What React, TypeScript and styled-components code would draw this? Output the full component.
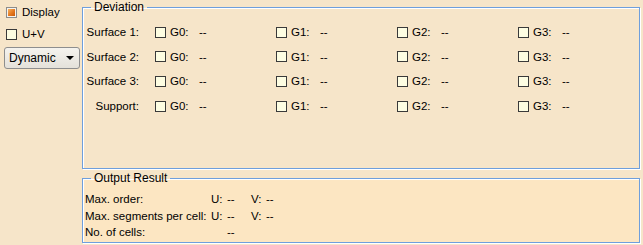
import React from 'react';
import styled, { createGlobalStyle } from 'styled-components';

const GlobalStyle = createGlobalStyle`
  html, body {
    margin: 0;
    padding: 0;
    background: #f6e5c9;
  }
  body {
    font-family: "Liberation Sans", Arial, sans-serif;
    font-size: 11.5px;
    color: #000;
  }
`;

const Page = styled.div`
  width: 643px;
  height: 245px;
  display: flex;
  overflow: hidden;
  background: #f6e5c9;
`;

const LeftColumn = styled.div`
  width: 82px;
  flex: none;
  display: flex;
  flex-direction: column;
  padding: 5px 0 0 6px;
  box-sizing: border-box;
`;

const OptionRow = styled.label`
  display: flex;
  align-items: center;
  height: 14px;
  margin-bottom: 8px;
  gap: 5px;
`;

const Box = styled.span<{ $mixed?: boolean }>`
  width: 11px;
  height: 11px;
  box-sizing: border-box;
  flex: none;
  border: 1px solid ${p => (p.$mixed ? '#8c8c8c' : '#3a3a3a')};
  background: ${p => (p.$mixed ? '#f6f4ee' : '#fdfde2')};
  display: flex;
  align-items: center;
  justify-content: center;

  &::after {
    content: '';
    display: ${p => (p.$mixed ? 'block' : 'none')};
    width: 7px;
    height: 7px;
    background: linear-gradient(135deg, #f7b25e 0%, #e5781f 55%, #c95a0a 100%);
  }
`;

const Select = styled.div`
  margin-left: -2px;
  margin-top: -2px;
  width: 76px;
  height: 22px;
  box-sizing: border-box;
  border: 1px solid #8e8e8e;
  border-radius: 3px;
  background: linear-gradient(#f5f3ee, #e4e1da);
  display: flex;
  align-items: center;
  justify-content: space-between;
  padding: 0 5px 0 4px;
  font-size: 12px;
`;

const Arrow = styled.span`
  width: 0;
  height: 0;
  border-left: 4px solid transparent;
  border-right: 4px solid transparent;
  border-top: 4px solid #000;
`;

const RightColumn = styled.div`
  width: 558px;
  flex: none;
  display: flex;
  flex-direction: column;
  gap: 2px;
`;

const Group = styled.fieldset<{ $height: number; $bg?: string }>`
  margin: 0;
  padding: 5px 0 0 2px;
  min-width: 0;
  width: 558px;
  height: ${p => p.$height}px;
  box-sizing: border-box;
  border: 1px solid #6f9fdc;
  box-shadow: inset 1px 1px 0 #ffffff, 1px 1px 0 #ffffff;
  background: ${p => p.$bg || 'transparent'};
  background-clip: padding-box;
`;

const Legend = styled.legend`
  margin-left: 6px;
  padding: 0 3px;
  height: 14px;
  line-height: 14px;
  font-size: 12px;
`;

const DevGrid = styled.div`
  display: grid;
  grid-template-columns: 70px repeat(4, 121px);
  grid-auto-rows: 24.6px;
  align-items: center;
  margin-top: 1px;
`;

const RowLabel = styled.span`
  text-align: right;
  padding-right: 16px;
  white-space: nowrap;
`;

const GCell = styled.label`
  display: flex;
  align-items: center;
`;

const GName = styled.span`
  width: 29px;
  margin-left: 4px;
`;

const OutGrid = styled.div`
  display: grid;
  grid-template-columns: 126px 16px 24px 15px auto;
  grid-auto-rows: 16.5px;
  align-items: center;
  margin-top: 1px;
  white-space: nowrap;
`;

const rows = ['Surface 1:', 'Surface 2:', 'Surface 3:', 'Support:'];
const orders = ['G0', 'G1', 'G2', 'G3'];

export default function App() {
  return (
    <>
      <GlobalStyle />
      <Page>
        <LeftColumn>
          <OptionRow>
            <Box $mixed />
            <span>Display</span>
          </OptionRow>
          <OptionRow>
            <Box />
            <span>U+V</span>
          </OptionRow>
          <Select>
            <span>Dynamic</span>
            <Arrow />
          </Select>
        </LeftColumn>
        <RightColumn>
          <Group $height={169}>
            <Legend>Deviation</Legend>
            <DevGrid>
              {rows.map(r => (
                <React.Fragment key={r}>
                  <RowLabel>{r}</RowLabel>
                  {orders.map(o => (
                    <GCell key={o}>
                      <Box />
                      <GName>{o}:</GName>
                      <span>--</span>
                    </GCell>
                  ))}
                </React.Fragment>
              ))}
            </DevGrid>
          </Group>
          <Group $height={72} $bg="#fce6c2">
            <Legend>Output Result</Legend>
            <OutGrid>
              <span>Max. order:</span>
              <span>U:</span>
              <span>--</span>
              <span>V:</span>
              <span>--</span>
              <span>Max. segments per cell:</span>
              <span>U:</span>
              <span>--</span>
              <span>V:</span>
              <span>--</span>
              <span>No. of cells:</span>
              <span />
              <span>--</span>
              <span />
              <span />
            </OutGrid>
          </Group>
        </RightColumn>
      </Page>
    </>
  );
}
